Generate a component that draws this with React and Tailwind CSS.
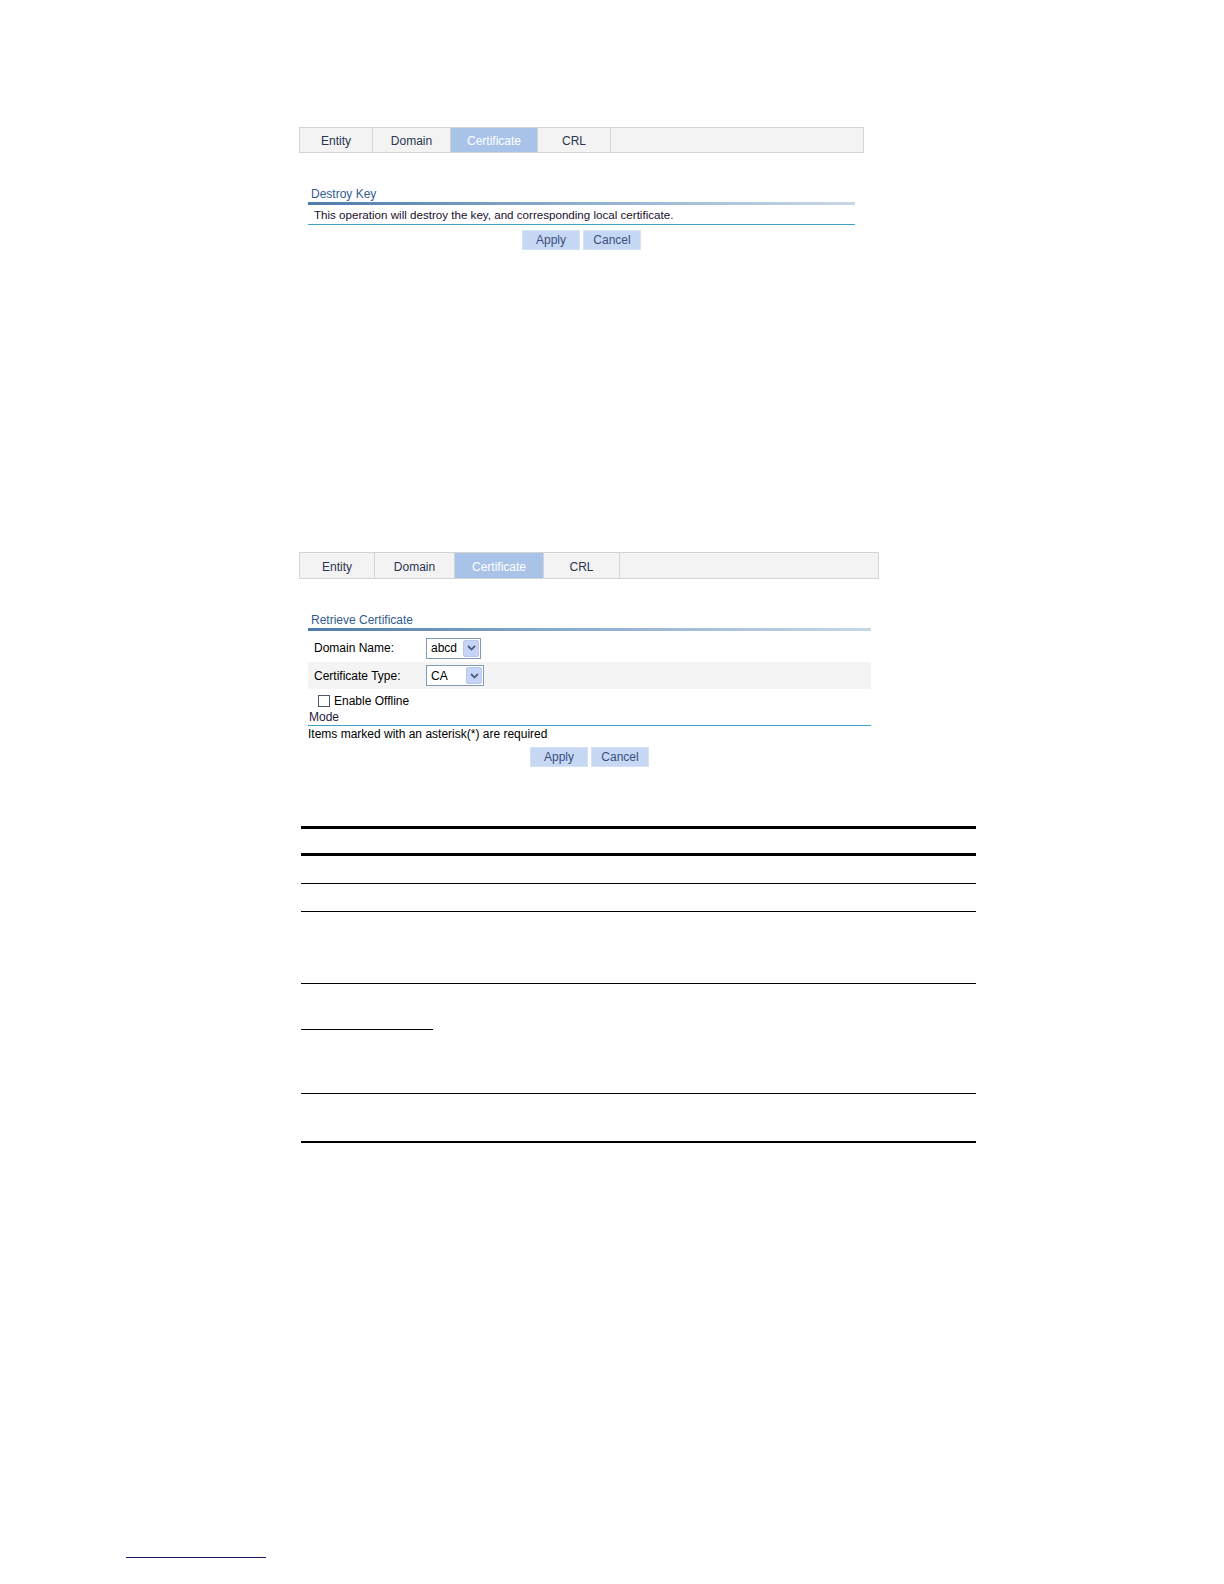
import React from "react";

const font = { fontFamily: '"Liberation Sans", Arial, sans-serif' };

function Tabs({ widths, total, height }) {
  const names = ["Entity", "Domain", "Certificate", "CRL"];
  return (
    <div
      className="flex border border-[#d4d4d4] bg-[#f3f3f3] text-[12px]"
      style={{ width: total, height }}
    >
      {names.map((n, i) => (
        <div
          key={n}
          className={
            "flex items-center justify-center border-r border-[#d4d4d4] pt-[2px] " +
            (n === "Certificate" ? "bg-[#a9c3e8] text-white" : "text-[#2a3550]")
          }
          style={{ width: widths[i] }}
        >
          {n}
        </div>
      ))}
      <div className="flex-1" />
    </div>
  );
}

function Title({ children }) {
  return (
    <div>
      <div className="h-[16px] pl-[3px] text-[12px] leading-[16px] text-[#335c8f]">{children}</div>
      <div className="h-[3px] bg-gradient-to-r from-[#4f7bab] via-[#8fb0d0] to-[#c9d8e6]" />
    </div>
  );
}

function Buttons() {
  return (
    <div className="flex justify-center gap-[3px]">
      <div className="flex h-[20px] w-[58px] items-center justify-center border border-[#d6e1f2] bg-[#c6d8f3] text-[12px] text-[#3a4f80]">
        Apply
      </div>
      <div className="flex h-[20px] w-[58px] items-center justify-center border border-[#d6e1f2] bg-[#c6d8f3] text-[12px] text-[#3a4f80]">
        Cancel
      </div>
    </div>
  );
}

function Select({ value, width }) {
  return (
    <div
      className="flex h-[21px] items-center justify-between border border-[#7f9db9] bg-white pl-[4px] pr-[1px] text-[12px] text-black"
      style={{ width }}
    >
      <span>{value}</span>
      <div className="flex h-[17px] w-[16px] items-center justify-center rounded-[2px] border border-[#b7c8ea] bg-[#c6d5f7]">
        <svg width="9" height="6" viewBox="0 0 9 6">
          <path d="M1 1 L4.5 4.5 L8 1" fill="none" stroke="#4d6185" strokeWidth="1.8" />
        </svg>
      </div>
    </div>
  );
}

export default function App() {
  return (
    <div className="relative h-[1584px] w-[1224px] overflow-hidden bg-white" style={font}>
      {/* Section 1 */}
      <div className="ml-[299px] pt-[127px]">
        <Tabs widths={[73, 78, 87, 73]} total={565} height={26} />
        <div className="ml-[9px] mt-[33px] w-[547px]">
          <Title>Destroy Key</Title>
          <div className="flex h-[20px] items-center border-b border-[#3fa3c8] pl-[6px] text-[11.6px] text-[#1a0f2e]">
            This operation will destroy the key, and corresponding local certificate.
          </div>
          <div className="mt-[5px]">
            <Buttons />
          </div>
        </div>
      </div>

      {/* Section 2 */}
      <div className="ml-[299px] mt-[302px]">
        <Tabs widths={[75, 80, 89, 76]} total={580} height={27} />
        <div className="ml-[9px] mt-[33px] w-[563px]">
          <Title>Retrieve Certificate</Title>
          <div className="flex h-[31px] items-center pt-[3px] text-[12px] text-black">
            <div className="w-[118px] pl-[6px]">Domain Name:</div>
            <Select value="abcd" width={55} />
          </div>
          <div className="flex h-[27px] items-center bg-[#f4f4f4] text-[12px] text-black">
            <div className="w-[118px] pl-[6px]">Certificate Type:</div>
            <Select value="CA" width={58} />
          </div>
          <div className="flex h-[20px] items-center pl-[10px] pt-[4px] text-[12px] text-black">
            <div className="mr-[4px] h-[12px] w-[12px] border border-[#4a5a6a] bg-white" />
            <span>Enable Offline</span>
          </div>
          <div className="h-[17px] border-b border-[#3fa3c8] pl-[1px] text-[12px] leading-[16px] text-[#2a1a3a]">
            Mode
          </div>
          <div className="h-[16px] text-[12px] leading-[16px] text-black">
            Items marked with an asterisk(*) are required
          </div>
          <div className="mt-[5px]">
            <Buttons />
          </div>
        </div>
      </div>

      {/* Table rules */}
      <div className="ml-[301px] mt-[59px] w-[675px]">
        <div className="h-[3px] bg-black" />
        <div className="h-[24px]" />
        <div className="h-[3px] bg-black" />
        <div className="h-[27px]" />
        <div className="h-px bg-black" />
        <div className="h-[27px]" />
        <div className="h-px bg-black" />
        <div className="h-[71px]" />
        <div className="h-px bg-black" />
        <div className="h-[45px]" />
        <div className="h-px w-[132px] bg-black" />
        <div className="h-[63px]" />
        <div className="h-px bg-black" />
        <div className="h-[47px]" />
        <div className="h-[2px] bg-black" />
      </div>

      {/* Footnote rule */}
      <div className="ml-[126px] mt-[414px] h-px w-[140px] bg-[#1a1a6a]" />
    </div>
  );
}
